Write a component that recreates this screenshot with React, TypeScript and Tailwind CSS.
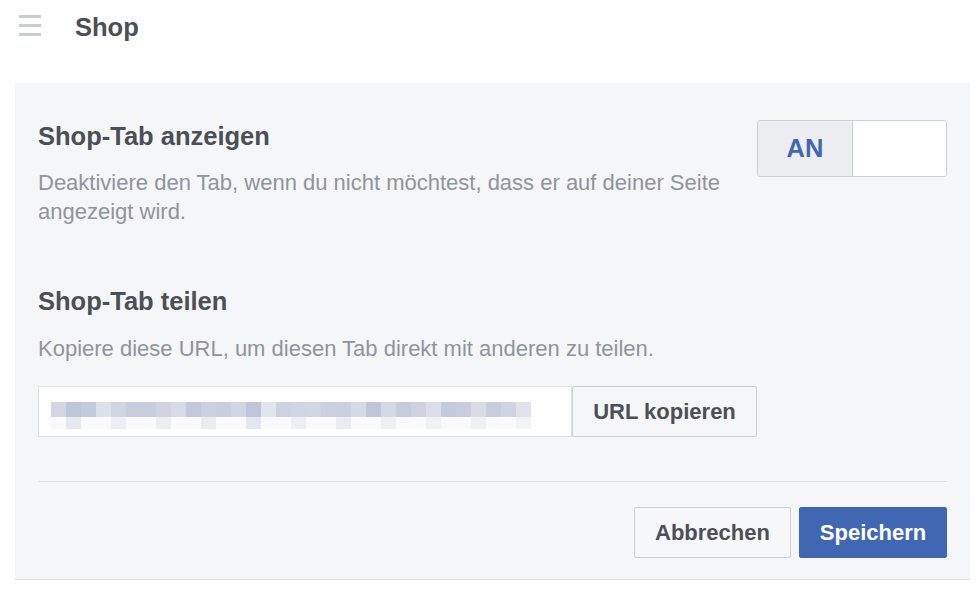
import React from 'react';

const blurTop = [
  '#d3d6e4', '#bfc6da', '#c4cadd', '#dde1ec', '#d0d5e3', '#c8cede', '#c8cede', '#cfd3e2',
  '#d8dbe6', '#c2c9dc', '#cbd1e1', '#c9cfe0', '#d2d6e4', '#bfc5da', '#e3e5ee', '#cdd2e2',
  '#d0d5e3', '#d2d6e4', '#ccd1e1', '#cbd0e0', '#d6d9e6', '#c0c6da', '#d5d9e5', '#c6cbdd',
  '#cdd1e1', '#dbdee9', '#c4cadd', '#c9cedf', '#d9dce7', '#c9cedf', '#cfd3e2', '#e0e3ec',
];

const Blur: React.FC = () => (
  <div className="flex flex-col">
    <div className="flex">
      {blurTop.map((c, i) => (
        <div key={i} className="h-[15px] w-[15px]" style={{ background: c }} />
      ))}
    </div>
    <div className="flex opacity-40">
      {blurTop.map((c, i) => (
        <div key={i} className="h-[12px] w-[15px]" style={{ background: i % 3 === 1 ? c : '#f3f4f8' }} />
      ))}
    </div>
  </div>
);

const App: React.FC = () => {
  return (
    <div className="h-[594px] w-[980px] bg-white font-['Liberation_Sans',Arial,sans-serif] text-[#4b4f56]">
      <div className="flex h-[83px] items-start pt-[12px]">
        <div className="ml-[19px] mt-[3px] flex w-[22px] flex-col gap-[6px]">
          <div className="h-[3px] bg-[#c9ccd1]" />
          <div className="h-[3px] bg-[#c9ccd1]" />
          <div className="h-[3px] bg-[#c9ccd1]" />
        </div>
        <h1 className="ml-[34px] text-[25.5px] font-bold leading-[30px]">Shop</h1>
      </div>

      <div className="ml-[15px] mr-[10px] border-b border-[#dddfe2] bg-[#f5f6f7] px-[23px] pb-[21px] pt-[38px]">
        <div className="flex items-start justify-between">
          <div className="w-[700px]">
            <h2 className="text-[25.5px] font-bold leading-[30px]">Shop-Tab anzeigen</h2>
            <p className="mt-[17px] text-[22px] leading-[29px] text-[#90949c]">
              Deaktiviere den Tab, wenn du nicht möchtest, dass er auf deiner Seite angezeigt wird.
            </p>
          </div>
          <div className="-mt-[1px] flex h-[57px] w-[190px] overflow-hidden rounded-[3px] border border-[#ccd0d5]">
            <div className="flex w-[95px] items-center justify-center border-r border-[#ccd0d5] bg-[#ebedf0] text-[25.5px] font-bold text-[#4267b2]">
              AN
            </div>
            <div className="flex-1 bg-white" />
          </div>
        </div>

        <h2 className="mt-[60px] text-[25.5px] font-bold leading-[30px]">Shop-Tab teilen</h2>
        <p className="mt-[18px] text-[22px] leading-[29px] text-[#90949c]">
          Kopiere diese URL, um diesen Tab direkt mit anderen zu teilen.
        </p>

        <div className="mt-[23px] flex">
          <div className="flex h-[51px] w-[534px] items-start border border-[#dddfe2] bg-white pl-[12px] pt-[15px]">
            <Blur />
          </div>
          <button className="h-[51px] w-[185px] rounded-[2px] border border-[#ccd0d5] bg-[#f5f6f7] text-[22px] font-bold text-[#4b4f56]">
            URL kopieren
          </button>
        </div>

        <div className="mt-[44px] border-t border-[#dddfe2]" />

        <div className="mt-[25px] flex justify-end gap-[8px]">
          <button className="h-[51px] w-[157px] rounded-[2px] border border-[#ccd0d5] bg-[#f6f7f9] text-[22px] font-bold text-[#4b4f56]">
            Abbrechen
          </button>
          <button className="h-[51px] w-[148px] rounded-[2px] border border-[#4267b2] bg-[#4267b2] text-[22px] font-bold text-white">
            Speichern
          </button>
        </div>
      </div>
    </div>
  );
};

export default App;
